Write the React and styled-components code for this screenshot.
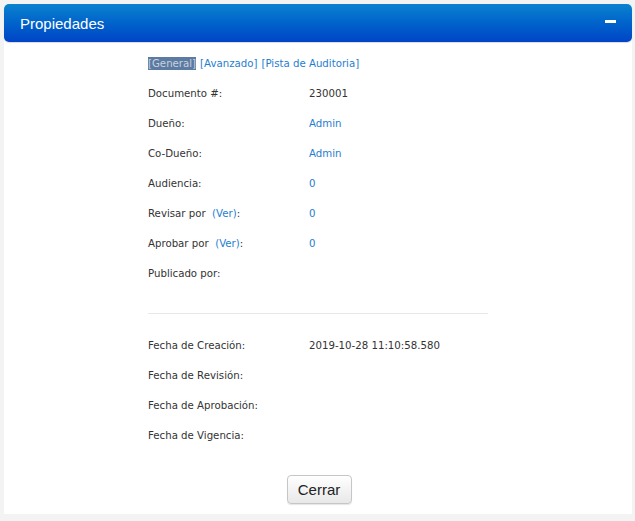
import React from "react";
import styled, { createGlobalStyle } from "styled-components";

const GlobalStyle = createGlobalStyle`
  html, body {
    margin: 0;
    padding: 0;
    background: #f3f3f3;
  }
`;

const generalRows = [
  { label: "Documento #:", value: "230001" },
  { label: "Dueño:", value: "Admin", link: true },
  { label: "Co-Dueño:", value: "Admin", link: true },
  { label: "Audiencia:", value: "0", link: true },
  { label: "Revisar por", ver: true, value: "0", link: true },
  { label: "Aprobar por", ver: true, value: "0", link: true },
  { label: "Publicado por:", value: "" },
];

const dateRows = [
  { label: "Fecha de Creación:", value: "2019-10-28 11:10:58.580" },
  { label: "Fecha de Revisión:", value: "" },
  { label: "Fecha de Aprobación:", value: "" },
  { label: "Fecha de Vigencia:", value: "" },
];

const App = () => (
  <Page>
    <GlobalStyle />
    <Panel>
      <Header>
        <Title>Propiedades</Title>
        <Minimize aria-label="minimizar" />
      </Header>
      <Body>
        <Content>
          <Tabs>
            <Tab active>[General]</Tab>
            <Tab>[Avanzado]</Tab>
            <Tab>[Pista de Auditoria]</Tab>
          </Tabs>
          {generalRows.map((r) => (
            <Row key={r.label}>
              <Label>
                {r.label}
                {r.ver && (
                  <>
                    {"  "}
                    <Link>(Ver)</Link>:
                  </>
                )}
              </Label>
              <Value link={r.link}>{r.value}</Value>
            </Row>
          ))}
          <Divider />
          {dateRows.map((r) => (
            <Row key={r.label}>
              <Label>{r.label}</Label>
              <Value>{r.value}</Value>
            </Row>
          ))}
        </Content>
        <Footer>
          <Button>Cerrar</Button>
        </Footer>
      </Body>
    </Panel>
  </Page>
);

const Page = styled.div`
  padding: 4px 3px 7px 4px;
`;

const Panel = styled.div`
  background: #fff;
  border-radius: 5px 5px 0 0;
`;

const Header = styled.div`
  height: 38px;
  display: flex;
  align-items: center;
  justify-content: space-between;
  padding: 0 16px 0 16px;
  background: linear-gradient(to bottom, #0a82cf 0%, #0063cb 50%, #0044c6 100%);
  border-radius: 5px;
  box-shadow: 0 1px 1px rgba(0, 0, 0, 0.15);
`;

const Title = styled.span`
  font-family: "Liberation Sans", Arial, sans-serif;
  font-size: 15px;
  color: #fff;
`;

const Minimize = styled.span`
  width: 11px;
  height: 3px;
  margin-top: -4px;
  background: #fff;
`;

const Body = styled.div`
  padding: 6px 0 10px;
`;

const Content = styled.div`
  width: 340px;
  margin: 0 auto;
  font-family: "DejaVu Sans", Verdana, sans-serif;
  font-size: 10.2px;
  color: #333;
`;

const Tabs = styled.div`
  height: 30px;
  display: flex;
  align-items: center;
  gap: 4px;
  white-space: pre;
`;

const Tab = styled.span`
  color: ${(p) => (p.active ? "#c9d1dc" : "#1f7ed0")};
  background: ${(p) => (p.active ? "#5b7ba3" : "transparent")};
  padding: 1px 0;
`;

const Row = styled.div`
  height: 30px;
  display: grid;
  grid-template-columns: 161px 1fr;
  align-items: center;
`;

const Label = styled.span`
  white-space: pre;
`;

const Link = styled.span`
  color: #1f7ed0;
`;

const Value = styled.span`
  color: ${(p) => (p.link ? "#1f7ed0" : "#333")};
`;

const Divider = styled.div`
  height: 1px;
  background: #e8e8e8;
  margin: 25px 0 16px;
`;

const Footer = styled.div`
  display: flex;
  justify-content: center;
  padding-top: 25px;
`;

const Button = styled.button`
  width: 65px;
  height: 29px;
  font-family: "Liberation Sans", Arial, sans-serif;
  font-size: 15px;
  color: #222;
  background: linear-gradient(to bottom, #ffffff, #e8e8e8);
  border: 1px solid #c6c6c6;
  border-radius: 4px;
  box-shadow: 0 1px 1px rgba(0, 0, 0, 0.1);
  cursor: pointer;
  margin-left: 2px;
`;

export default App;
